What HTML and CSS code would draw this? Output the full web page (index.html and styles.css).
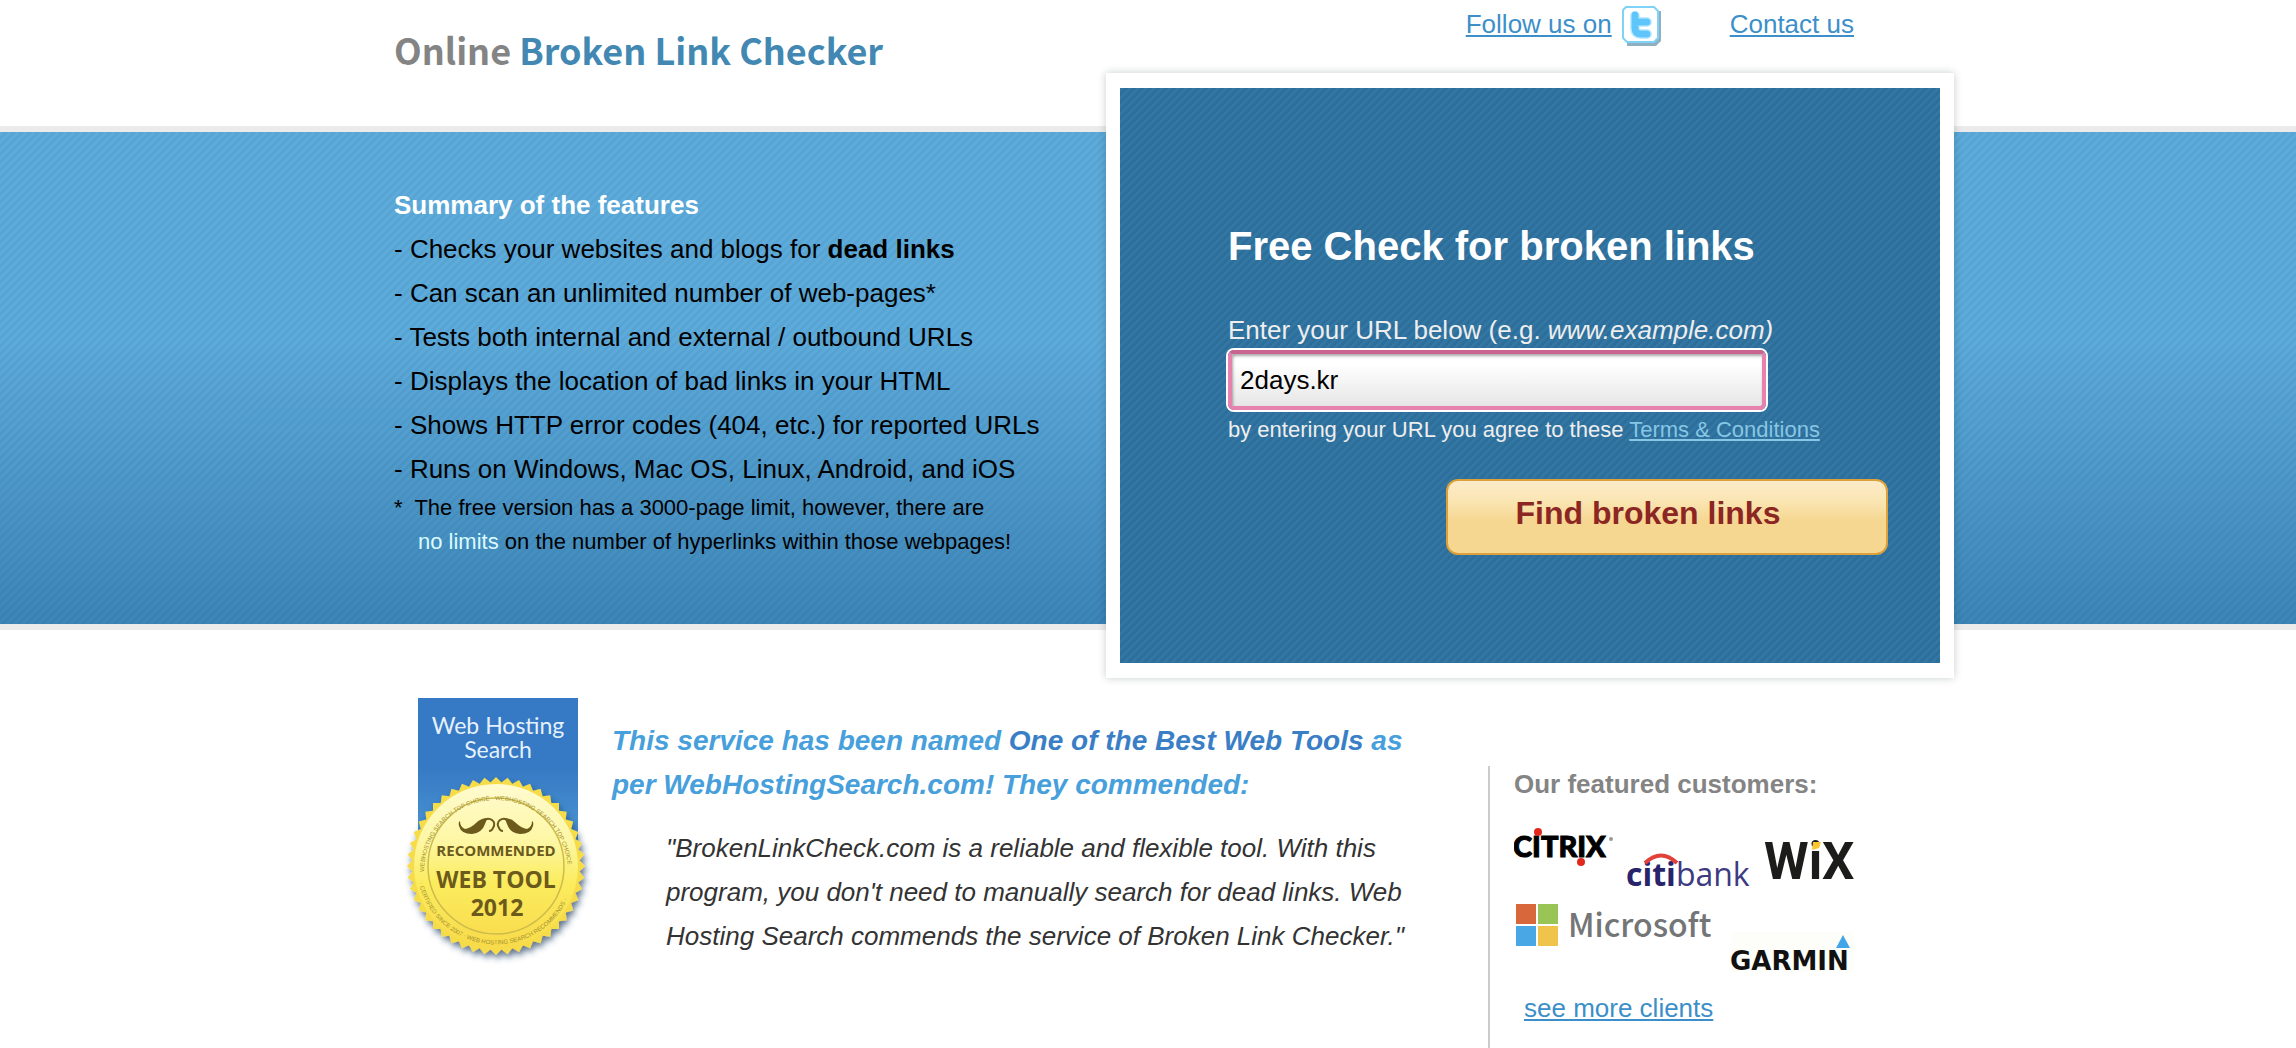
FILE: index.html
```
<!DOCTYPE html>
<html lang="en">

<head>
    <meta charset="utf-8">
    <title>Online Broken Link Checker</title>
    <link rel="stylesheet" href="styles.css">
</head>

<body>

    <header class="header wrap">
        <h1 class="title"><span>Online</span> Broken Link Checker</h1>
        <nav class="nav">
            <a href="#twitter">Follow us on</a>
            <svg class="twitter" viewBox="0 0 40 40" aria-hidden="true">
                <path d="M5 5h34v30l-5 5H5z" fill="#8fb0c0" />
                <path d="M4 1h28l4 4v27l-4 4H5l-4-4V4z" fill="#fff" stroke="#7fd3f7" stroke-width="2" />
                <path d="M13 10v12q0 6 6 6h6M14 16h11" fill="none" stroke="#c6ecff" stroke-width="10" stroke-linecap="round" stroke-linejoin="round" />
                <path d="M13 9v13q0 6 6 6h6M14 16h11" fill="none" stroke="#5fc6fb" stroke-width="7" stroke-linecap="round" stroke-linejoin="round" />
            </svg>
            <a class="contact" href="#contact">Contact us</a>
        </nav>
    </header>

    <section class="band">
        <div class="wrap band-inner">
            <div class="features">
                <h2>Summary of the features</h2>
                <ul>
                    <li>- Checks your websites and blogs for <b>dead links</b></li>
                    <li>- Can scan an unlimited number of web-pages*</li>
                    <li>- Tests both internal and external / outbound URLs</li>
                    <li>- Displays the location of bad links in your HTML</li>
                    <li>- Shows HTTP error codes (404, etc.) for reported URLs</li>
                    <li>- Runs on Windows, Mac OS, Linux, Android, and iOS</li>
                </ul>
                <p class="note">*&nbsp; The free version has a 3000-page limit, however, there are</p>
                <p class="note second"><span>no limits</span> on the number of hyperlinks within those webpages!</p>
            </div>

            <form class="panel">
                <div class="panel-inner">
                    <h2>Free Check for broken links</h2>
                    <label for="url">Enter your URL below (e.g. <i>www.example.com)</i></label>
                    <input id="url" type="text" value="2days.kr">
                    <p class="terms">by entering your URL you agree to these <a href="#terms">Terms &amp; Conditions</a></p>
                    <button type="submit">Find broken links</button>
                </div>
            </form>
        </div>
    </section>

    <main class="lower wrap">
        <svg class="badge" viewBox="0 0 200 280" role="img" aria-label="Recommended web tool 2012">
            <defs>
                <linearGradient id="ribbon" x1="0" y1="0" x2="0" y2="1">
                    <stop offset="0.45" stop-color="#3679c4" />
                    <stop offset="1" stop-color="#4c99d4" />
                </linearGradient>
                <linearGradient id="gold" x1="0" y1="0" x2="0" y2="1">
                    <stop offset="0" stop-color="#fffbd0" />
                    <stop offset="0.35" stop-color="#fdf7a4" />
                    <stop offset="0.6" stop-color="#fbec5e" />
                    <stop offset="1" stop-color="#f8da4a" />
                </linearGradient>
                <filter id="shadow" x="-20%" y="-20%" width="150%" height="150%">
                    <feDropShadow dx="2" dy="4" stdDeviation="3" flood-color="#1d3a5e" flood-opacity="0.7" />
                </filter>
                <rect id="tooth" x="-63" y="-63" width="126" height="126" />
                <path id="arcTop" d="M-72 6A72 72 0 1 1 72 6" />
                <path id="arcBottom" d="M-77 17A79 79 0 0 0 77 17" />
            </defs>
            <rect x="18" y="6" width="160" height="150" fill="url(#ribbon)" />
            <g class="ribbon-text">
                <text x="98" y="42">Web Hosting</text>
                <text x="98" y="66">Search</text>
            </g>
            <g transform="translate(96 174)">
                <g fill="#f7dc48" filter="url(#shadow)">
                    <use href="#tooth" />
                    <use href="#tooth" transform="rotate(7.5)" />
                    <use href="#tooth" transform="rotate(15)" />
                    <use href="#tooth" transform="rotate(22.5)" />
                    <use href="#tooth" transform="rotate(30)" />
                    <use href="#tooth" transform="rotate(37.5)" />
                    <use href="#tooth" transform="rotate(45)" />
                    <use href="#tooth" transform="rotate(52.5)" />
                    <use href="#tooth" transform="rotate(60)" />
                    <use href="#tooth" transform="rotate(67.5)" />
                    <use href="#tooth" transform="rotate(75)" />
                    <use href="#tooth" transform="rotate(82.5)" />
                </g>
                <circle r="82" fill="url(#gold)" />
                <circle r="68" fill="none" stroke="#cdbb4c" stroke-width="1.5" />
                <g class="ring-text">
                    <text><textPath href="#arcTop">WEBHOSTING SEARCH TOP CHOICE · WEBHOSTING SEARCH TOP CHOICE</textPath></text>
                    <text><textPath href="#arcBottom">· CERTIFIED SINCE 2007 · WEB HOSTING SEARCH RECOMMENDS ·</textPath></text>
                </g>
                <g id="scroll" fill="#6b5a1c">
                    <path d="M-36 -45q0 6 5 8q6 -1 11 -6q6 -6 12 -4q-2 1 -3 5q-3 9 -13 10q-11 0 -13 -8q-1 -4 1 -5z" />
                    <path d="M-14 -45q6 -4 10 -1q4 3 1 8q-1 3 -4 3" fill="none" stroke="#6b5a1c" stroke-width="2" />
                </g>
                <use href="#scroll" transform="scale(-1 1)" />
                <g class="seal-text">
                    <text class="small" x="0" y="-10">RECOMMENDED</text>
                    <text x="0" y="22">WEB TOOL</text>
                    <text class="year" x="1" y="50">2012</text>
                </g>
            </g>
        </svg>

        <div class="award">
            <h3>This service has been named <a href="#best">One of the Best Web Tools</a> as per WebHostingSearch.com! They commended:</h3>
            <blockquote>"BrokenLinkCheck.com is a reliable and flexible tool. With this program, you don't need to manually search for dead links. Web Hosting Search commends the service of Broken Link Checker."</blockquote>
        </div>

        <aside class="customers">
            <h4>Our featured customers:</h4>
            <svg class="logos" viewBox="0 0 342 152">
                <!-- citrix -->
                <text class="citrix" x="-1" y="33">CITRIX</text>
                <circle cx="24" cy="8" r="4" fill="#e0281c" />
                <circle cx="67" cy="38" r="4" fill="#e0281c" />
                <circle cx="97" cy="15" r="2" fill="#999" />
                <!-- citibank -->
                <text class="citi" x="112" y="62"><tspan class="heavy">citi</tspan>bank</text>
                <path d="M131 39q16 -15 32 0" fill="none" stroke="#e2413a" stroke-width="4" />
                <!-- wix -->
                <text class="wix" x="250" y="55">WiX</text>
                <path d="M299 18h8l-2 6l-7 2z" fill="#fbc62e" />
                <!-- microsoft -->
                <rect x="2" y="80" width="20" height="20" fill="#d8683b" />
                <rect x="24" y="80" width="20" height="20" fill="#98c555" />
                <rect x="2" y="102" width="20" height="20" fill="#4aa7e6" />
                <rect x="24" y="102" width="20" height="20" fill="#f0c34a" />
                <text class="microsoft" x="54" y="113">Microsoft</text>
                <!-- garmin -->
                <rect x="218" y="108" width="122" height="40" fill="#fdfdfa" />
                <text class="garmin" x="216" y="146">GARMIN</text>
                <path d="M329 111l7 13h-14z" fill="#42a5e8" />
            </svg>
            <a class="more" href="#clients">see more clients</a>
        </aside>
    </main>

</body>

</html>
```
FILE: styles.css
```
* {
    box-sizing: border-box;
}

body {
    margin: 0;
    min-height: 100vh;
    display: flex;
    flex-direction: column;
    background: #fff;
    font-family: "Liberation Sans", Arial, sans-serif;
    font-size: 26px;
    line-height: 44px;
    color: #000;
}

h1, h2, h3, h4, p, ul, blockquote {
    margin: 0;
    padding: 0;
}

a {
    color: #3c8fc9;
}

.wrap {
    width: 100%;
    max-width: 1508px;
    margin: 0 auto;
}

/* header */
.header {
    display: flex;
    justify-content: space-between;
    align-items: flex-start;
    height: 126px;
    padding-right: 48px;
}

.title {
    padding-top: 27px;
    font-family: "Noto Sans CJK SC", "Open Sans", sans-serif;
    font-size: 36px;
    font-weight: 700;
    color: #4288b2;
}

.title span {
    color: #848484;
}

.nav {
    display: flex;
    align-items: flex-start;
    padding-top: 2px;
}

.twitter {
    width: 40px;
    height: 40px;
    margin: 4px 68px 0 10px;
}

/* blue band */
.band {
    border-top: 6px solid #ebebeb;
    border-bottom: 6px solid #ebebeb;
    background:
        linear-gradient(135deg, transparent 25%, rgba(0, 50, 90, .06) 25% 50%, transparent 50% 75%, rgba(0, 50, 90, .06) 75%) 0 0 / 8px 8px,
        linear-gradient(#5dabdb 0%, #5dabdb 42%, #3d85b7 100%);
}

.band-inner {
    display: flex;
    justify-content: space-between;
}

.features {
    padding-top: 51px;
}

.features h2 {
    font-size: 26px;
    color: #fff;
}

.features ul {
    list-style: none;
}

.note {
    font-size: 22px;
    line-height: 34px;
}

.second {
    padding-left: 24px;
}

.second span {
    color: #d9fbff;
}

.panel {
    flex: 0 0 848px;
    margin: -59px -52px -54px 0;
    padding: 15px 14px;
    background: #fff;
    box-shadow: 0 0 8px rgba(0, 30, 30, .22);
}

.panel-inner {
    display: flex;
    flex-direction: column;
    align-items: flex-start;
    padding: 134px 52px 108px 108px;
    background:
        linear-gradient(135deg, transparent 25%, rgba(0, 30, 70, .09) 25% 50%, transparent 50% 75%, rgba(0, 30, 70, .09) 75%) 0 0 / 8px 8px,
        #3276a3;
    color: #eee;
}

.panel h2 {
    font-size: 40px;
    line-height: 48px;
    margin-bottom: 44px;
    color: #fff;
}

.panel label {
    line-height: 32px;
    margin-bottom: 4px;
}

.panel input {
    width: 100%;
    max-width: 538px;
    height: 60px;
    padding: 0 8px;
    border: 4px solid #e782ae;
    border-top-color: #c9638f;
    border-radius: 6px;
    box-shadow: 0 0 0 2px #fff, inset 1px 2px 3px rgba(0, 0, 0, .35);
    background: linear-gradient(#fff 20%, #e6e6e6);
    font: inherit;
    color: #000;
}

.terms {
    margin: 6px 0 35px;
    font-size: 22px;
    line-height: 28px;
}

.terms a {
    color: #87c6e4;
}

.panel button {
    align-self: flex-end;
    width: 442px;
    height: 76px;
    padding: 0 38px 8px 0;
    border: 2px solid #dda03a;
    border-radius: 12px;
    background: linear-gradient(#fcebca, #fae5b2 28%, #f6d792 55%, #f5d790);
    font: bold 32px "Liberation Sans", Arial, sans-serif;
    color: #8c2622;
}

/* award and customers */
.lower {
    flex: 1;
    display: flex;
    padding-right: 48px;
}

.badge {
    flex: none;
    width: 200px;
    height: 280px;
    margin: 62px 12px 0 6px;
}

.ribbon-text {
    font-family: Lato, sans-serif;
    font-size: 23px;
    fill: #e4f1fc;
    text-anchor: middle;
}

.ring-text {
    font-family: "Liberation Sans", Arial, sans-serif;
    font-size: 6px;
    fill: #a39130;
}

.seal-text {
    font-family: "Open Sans", sans-serif;
    font-size: 23px;
    font-weight: 700;
    fill: #6b5a1c;
    text-anchor: middle;
}

.seal-text .small {
    font-size: 15px;
}

.award {
    flex: 1;
    padding-top: 89px;
}

.award h3 {
    max-width: 820px;
    font-size: 28px;
    font-style: italic;
    color: #479fdb;
}

.award a {
    color: #3a7fc6;
    text-decoration: none;
}

.award blockquote {
    max-width: 820px;
    margin-top: 19px;
    padding-left: 54px;
    font-style: italic;
    color: #333;
}

.customers {
    flex: 0 0 366px;
    margin-top: 136px;
    margin-right: -2px;
    border-left: 2px solid #ccc;
    padding-left: 24px;
    padding-bottom: 16px;
}

.customers h4 {
    line-height: 36px;
    color: #848484;
}

.logos {
    display: block;
    width: 342px;
    height: 152px;
    margin-top: 22px;
}

.citrix {
    font: 900 29px Lato, sans-serif;
    stroke: #000;
    stroke-width: 1px;
}

.citi {
    font: 400 32px "Open Sans", sans-serif;
    fill: #3d3a82;
}

.citi .heavy {
    font-weight: 700;
    fill: #28246b;
}

.wix {
    font: 700 51px Roboto, sans-serif;
    fill: #1c1c1a;
}

.microsoft {
    font: 500 32px "Noto Sans CJK SC", sans-serif;
    fill: #737577;
}

.garmin {
    font: 700 26px "DejaVu Sans", sans-serif;
    fill: #111;
}

.more {
    display: inline-block;
    margin: 10px 0 0 10px;
}
```
